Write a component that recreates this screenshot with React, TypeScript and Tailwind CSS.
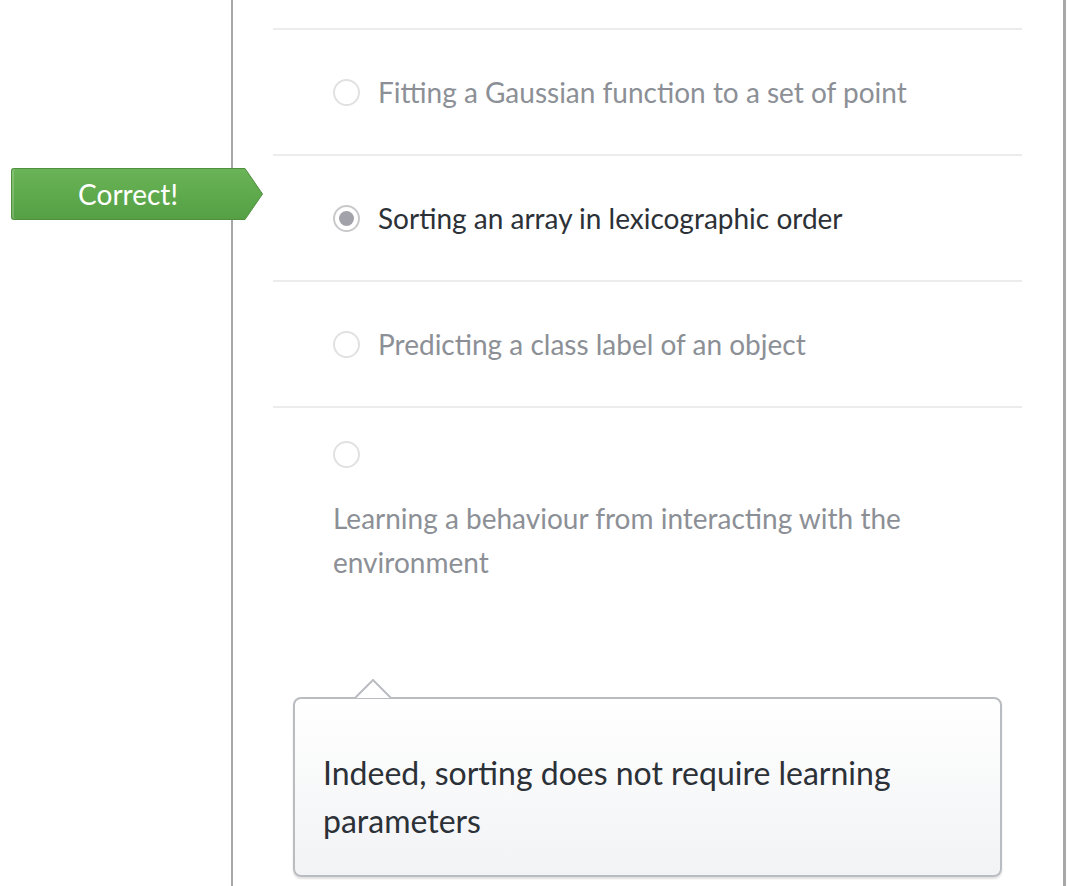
import React from "react";

function Radio({ selected }: { selected?: boolean }) {
  return (
    <span
      className={
        "flex h-[27px] w-[27px] shrink-0 items-center justify-center rounded-full border-2 bg-white " +
        (selected ? "border-[#c9c9cc]" : "border-[#e1e1e3]")
      }
    >
      {selected && <span className="h-[15px] w-[15px] rounded-full bg-[#a2a2aa]" />}
    </span>
  );
}

function Option({ text, selected }: { text: string; selected?: boolean }) {
  return (
    <div className="flex h-[124px] items-center gap-[18px] pl-[60px]">
      <Radio selected={selected} />
      <span className={"text-[28px] " + (selected ? "text-[#2c3137]" : "text-[#8c9096]")}>{text}</span>
    </div>
  );
}

export default function App() {
  return (
    <div
      className="flex h-[886px] w-[1068px] overflow-hidden bg-white"
      style={{ fontFamily: "Lato, 'Open Sans', sans-serif" }}
    >
      <div className="relative w-[233px] shrink-0 border-r-2 border-[#a7a7a7]">
        <div className="absolute left-[11px] top-[168px] z-10 flex h-[52px] w-[252px]">
          <div className="flex h-full w-[233px] items-center justify-center rounded-l-[3px] border border-[#4f8f3f] border-r-0 bg-gradient-to-b from-[#6ab457] to-[#55a044] text-[28px] text-white shadow-[inset_2px_0_0_rgba(255,255,255,0.18),inset_-1px_0_0_rgba(255,255,255,0.3)]">
            Correct!
          </div>
          <svg width="20" height="52" viewBox="0 0 20 52" className="-ml-[1px]">
            <defs>
              <linearGradient id="g" x1="0" y1="0" x2="0" y2="1">
                <stop offset="0" stopColor="#6ab457" />
                <stop offset="1" stopColor="#55a044" />
              </linearGradient>
            </defs>
            <path d="M0 0.5 L2 0.5 L19.5 26 L2 51.5 L0 51.5 Z" fill="url(#g)" stroke="#4f8f3f" strokeWidth="1" />
            <rect x="0" y="1" width="1" height="50" fill="url(#g)" />
          </svg>
        </div>
      </div>
      <div className="flex w-[833px] shrink-0 flex-col border-r-[3px] border-[#a7a7a7] pl-[40px] pr-[41px]">
        <div className="h-[30px] border-b-2 border-[#ececec]" />
        <div className="border-b-2 border-[#ececec]">
          <Option text="Fitting a Gaussian function to a set of point" />
        </div>
        <div className="border-b-2 border-[#ececec]">
          <Option text="Sorting an array in lexicographic order" selected />
        </div>
        <div className="border-b-2 border-[#ececec]">
          <Option text="Predicting a class label of an object" />
        </div>
        <div className="pl-[60px] pt-[33px]">
          <Radio />
          <p className="mt-[28px] w-[640px] text-[28px] leading-[44px] text-[#8c9096]">
            Learning a behaviour from interacting with the environment
          </p>
        </div>
        <div className="relative ml-[20px] mr-[20px] mt-[113px]">
          <svg width="40" height="20" viewBox="0 0 40 20" className="absolute -top-[18px] left-[62px] z-10">
            <path d="M0 19 L18 1 L36 19" fill="#ffffff" stroke="#b9bcc0" strokeWidth="2" />
          </svg>
          <div className="h-[180px] rounded-[8px] border-2 border-[#b9bcc0] bg-gradient-to-b from-white to-[#f2f3f5] px-[28px] pt-[50px] shadow-[0_2px_2px_rgba(0,0,0,0.12)]">
            <p className="text-[32px] leading-[48px] text-[#2c3137]">
              Indeed, sorting does not require learning parameters
            </p>
          </div>
        </div>
      </div>
    </div>
  );
}
